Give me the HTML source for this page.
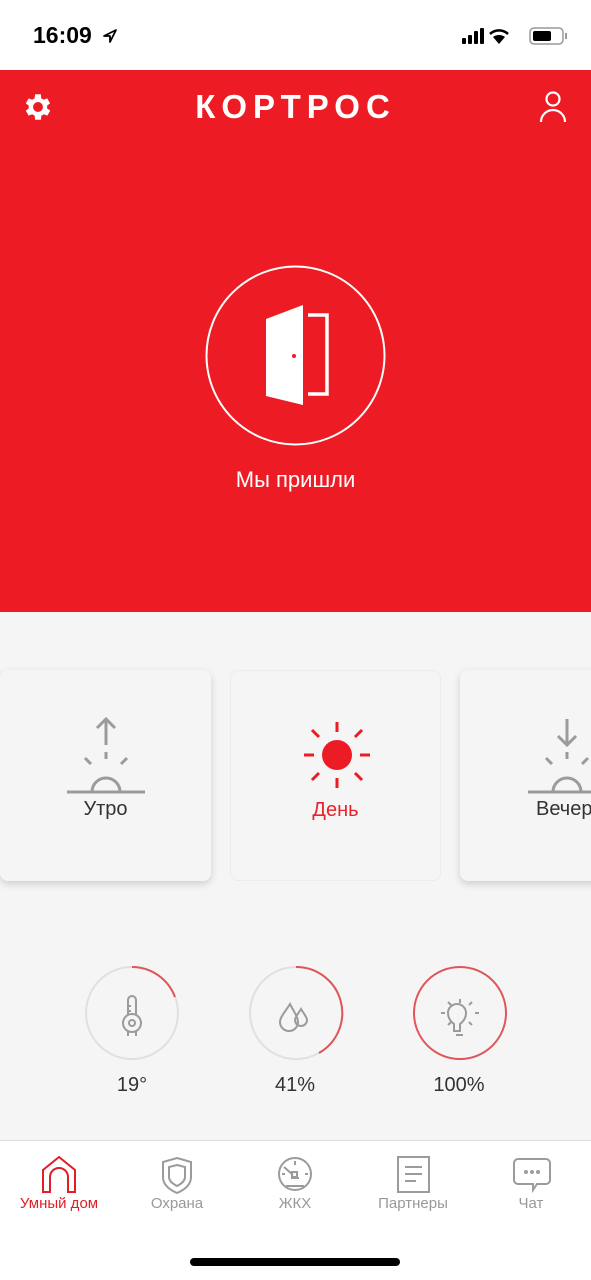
<!DOCTYPE html>
<html><head><meta charset="utf-8"><style>
*{margin:0;padding:0;box-sizing:border-box}
body{width:591px;height:1280px;position:relative;overflow:hidden;background:#f5f5f5;font-family:"Liberation Sans",sans-serif}
.abs{position:absolute}
.card{position:absolute;top:670px;width:211px;height:211px;background:#f5f5f5;border-radius:8px}
.sh{box-shadow:0 3px 8px rgba(0,0,0,.16)}
.lbl{position:absolute;width:100%;text-align:center;top:128px;font-size:20px;color:#333}
.val{position:absolute;top:1074px;width:120px;text-align:center;font-size:20px;color:#333}
.tab{position:absolute;top:1195px;width:118px;text-align:center;font-size:15px;color:#999}
</style></head><body>
<div class="abs" style="left:0;top:0;width:591px;height:70px;background:#fff"></div>
<div class="abs" style="left:33px;top:22px;font-size:23px;font-weight:bold;color:#000">16:09</div>
<svg class="abs" style="left:102px;top:28px" width="16" height="16" viewBox="0 0 16 16"><path d="M14 2 L2 8 L8 8 L8 14 Z" fill="none" stroke="#000" stroke-width="1.8" stroke-linejoin="round"/></svg>
<svg class="abs" style="left:462px;top:26px" width="110" height="22" viewBox="0 0 110 22">
<rect x="0" y="12" width="4" height="6" rx="1"/><rect x="6" y="9" width="4" height="9" rx="1"/><rect x="12" y="5" width="4" height="13" rx="1"/><rect x="18" y="2" width="4" height="16" rx="1"/>
<path d="M37 18 L31 11 A10 10 0 0 1 43 11 Z" fill="#000"/><path d="M28 8 A13 13 0 0 1 46 8" stroke="#000" stroke-width="2.6" fill="none"/>
<rect x="68" y="2" width="33" height="16" rx="4" fill="none" stroke="#999" stroke-width="1.5"/><rect x="71" y="5" width="18" height="10" rx="2"/><rect x="103" y="7" width="2" height="6" fill="#999"/></svg>
<div class="abs" style="left:0;top:70px;width:591px;height:542px;background:#ed1c24"></div>
<svg class="abs" style="left:21px;top:90px" width="34" height="34" viewBox="0 0 24 24"><path fill="#fff" d="M19.4 13a7.5 7.5 0 0 0 0-2l2.1-1.6-2-3.5-2.5 1a7 7 0 0 0-1.7-1L15 3h-4l-.4 2.9a7 7 0 0 0-1.7 1l-2.5-1-2 3.5L6.5 11a7.5 7.5 0 0 0 0 2l-2.1 1.6 2 3.5 2.5-1a7 7 0 0 0 1.7 1L11 21h4l.4-2.9a7 7 0 0 0 1.7-1l2.5 1 2-3.5zM13 15.5a3.5 3.5 0 1 1 0-7 3.5 3.5 0 0 1 0 7z" transform="translate(-1 0)"/></svg>
<div class="abs" style="left:0;width:591px;top:88px;text-align:center;color:#fff;font-size:33px;font-weight:bold;letter-spacing:6px">КОРТРОС</div>
<svg class="abs" style="left:538px;top:90px" width="30" height="34" viewBox="0 0 30 34"><circle cx="15" cy="9" r="6.5" fill="none" stroke="#fff" stroke-width="2.2"/><path d="M3 32 A12 12 0 0 1 27 32" fill="none" stroke="#fff" stroke-width="2.2"/></svg>
<svg class="abs" style="left:205px;top:265px" width="181" height="181" viewBox="0 0 181 181"><circle cx="90.5" cy="90.5" r="89" fill="none" stroke="#fff" stroke-width="2"/>
<path d="M61 54 L98 40 L98 140 L61 131 Z" fill="#fff"/><circle cx="89" cy="91" r="2" fill="#ed1c24"/><path d="M103 50 H122 V129 H103" fill="none" stroke="#fff" stroke-width="3.5"/></svg>
<div class="abs" style="left:0;width:591px;top:467px;text-align:center;color:#fff;font-size:22px">Мы пришли</div>
<div class="card sh" style="left:0">
<svg class="abs" style="left:65px;top:44px" width="82" height="82" viewBox="0 0 82 82" stroke="#9b9b9b" stroke-width="3" fill="none"><path d="M41 5 V31 M32 14 L41 5 L50 14"/><path d="M41 38 V45 M20 44 L26 50 M62 44 L56 50 M2 78 H80 M27 78 A14 14 0 0 1 55 78"/></svg>
<div class="lbl">Утро</div></div>
<div class="card" style="left:230px;border:1px solid #ececec">
<svg class="abs" style="left:71px;top:49px" width="70" height="70" viewBox="0 0 70 70" stroke="#ed1c24" stroke-width="3"><circle cx="35" cy="35" r="15" fill="#ed1c24" stroke="none"/><path d="M35 2 V12 M35 58 V68 M2 35 H12 M58 35 H68 M10 10 L17 17 M60 10 L53 17 M10 60 L17 53 M60 60 L53 53"/></svg>
<div class="lbl" style="color:#e8232b">День</div></div>
<div class="card sh" style="left:460px">
<svg class="abs" style="left:66px;top:44px" width="82" height="82" viewBox="0 0 82 82" stroke="#9b9b9b" stroke-width="3" fill="none"><path d="M41 5 V31 M32 22 L41 31 L50 22"/><path d="M41 38 V45 M20 44 L26 50 M62 44 L56 50 M2 78 H80 M27 78 A14 14 0 0 1 55 78"/></svg>
<div class="lbl" style="left:0;width:auto;padding-left:76px;text-align:left">Вечер</div></div>
<svg class="abs" style="left:0;top:960px" width="591" height="110" viewBox="0 960 591 110" fill="none">
<circle cx="132" cy="1013" r="46" stroke="#e0e0e0" stroke-width="2"/><path d="M132 967 A46 46 0 0 1 175 997" stroke="#e05558" stroke-width="2"/>
<circle cx="296" cy="1013" r="46" stroke="#e0e0e0" stroke-width="2"/><path d="M296 967 A46 46 0 0 1 319 1053" stroke="#e05558" stroke-width="2"/>
<circle cx="460" cy="1013" r="46" stroke="#e05558" stroke-width="2"/>
<g stroke="#9b9b9b" stroke-width="2"><path d="M128 1036 V1000 A4 4 0 0 1 136 1000 V1036"/><circle cx="132" cy="1023" r="9" fill="#f5f5f5"/><circle cx="132" cy="1023" r="3"/><path d="M128 1006 h3 M128 1011 h3"/>
<path d="M290 1004 C285 1012 280 1017 280 1022 A9 9 0 0 0 298 1022 C298 1017 294 1012 290 1004Z"/><path d="M301 1009 C298 1014 295 1017 295 1020 A6 6 0 0 0 307 1020 C307 1017 304 1014 301 1009Z"/>
<path d="M454 1031 V1024 C450 1021 448 1017 448 1013 A9 9 0 0 1 466 1013 C466 1017 464 1021 460 1024 V1031 Z M456 1035 H463 M460 999 V1003 M445 1013 H441 M475 1013 H479 M448 1002 L451 1005 M472 1002 L469 1005 M448 1025 L451 1022 M472 1025 L469 1022"/></g></svg>
<div class="val" style="left:72px">19°</div><div class="val" style="left:235px">41%</div><div class="val" style="left:399px">100%</div>
<div class="abs" style="left:0;top:1140px;width:591px;height:140px;background:#fff;border-top:1px solid #ddd"></div>
<svg class="abs" style="left:0;top:1155px" width="591" height="40" viewBox="0 0 591 40" fill="none" stroke-width="2">
<path d="M43 37 V15 L59 2 L75 15 V37 H68 V22 A9 9 0 0 0 50 22 V37 Z" stroke="#e01e26"/>
<path d="M177 3 L191 7 V22 C191 30 184 35 177 38 C170 35 163 30 163 22 V7 Z M177 10 L185 12 V22 C185 26 181 29 177 31 C173 29 169 26 169 22 V12 Z" stroke="#9b9b9b"/>
<g stroke="#9b9b9b"><circle cx="295" cy="19" r="16"/><path d="M284 12 L293 20 M291 23 H299 M286 31 H304 M295 6 V10 M305 19 H308 M282 19 H285"/><rect x="292" y="17" width="5" height="5"/></g>
<g stroke="#9b9b9b"><rect x="398" y="2" width="31" height="35"/><path d="M405 12 H422 M405 19 H422 M405 26 H416"/></g>
<path d="M518 4 H546 A4 4 0 0 1 550 8 V25 A4 4 0 0 1 546 29 H537 L533 35 V29 H518 A4 4 0 0 1 514 25 V8 A4 4 0 0 1 518 4Z" stroke="#9b9b9b"/>
<g fill="#9b9b9b"><circle cx="526" cy="17" r="2"/><circle cx="532" cy="17" r="2"/><circle cx="538" cy="17" r="2"/></g></svg>
<div class="tab" style="left:0;color:#e01e26">Умный дом</div>
<div class="tab" style="left:118px">Охрана</div>
<div class="tab" style="left:236px">ЖКХ</div>
<div class="tab" style="left:354px">Партнеры</div>
<div class="tab" style="left:472px">Чат</div>
<div class="abs" style="left:190px;top:1258px;width:210px;height:8px;border-radius:4px;background:#000"></div>
</body></html>
